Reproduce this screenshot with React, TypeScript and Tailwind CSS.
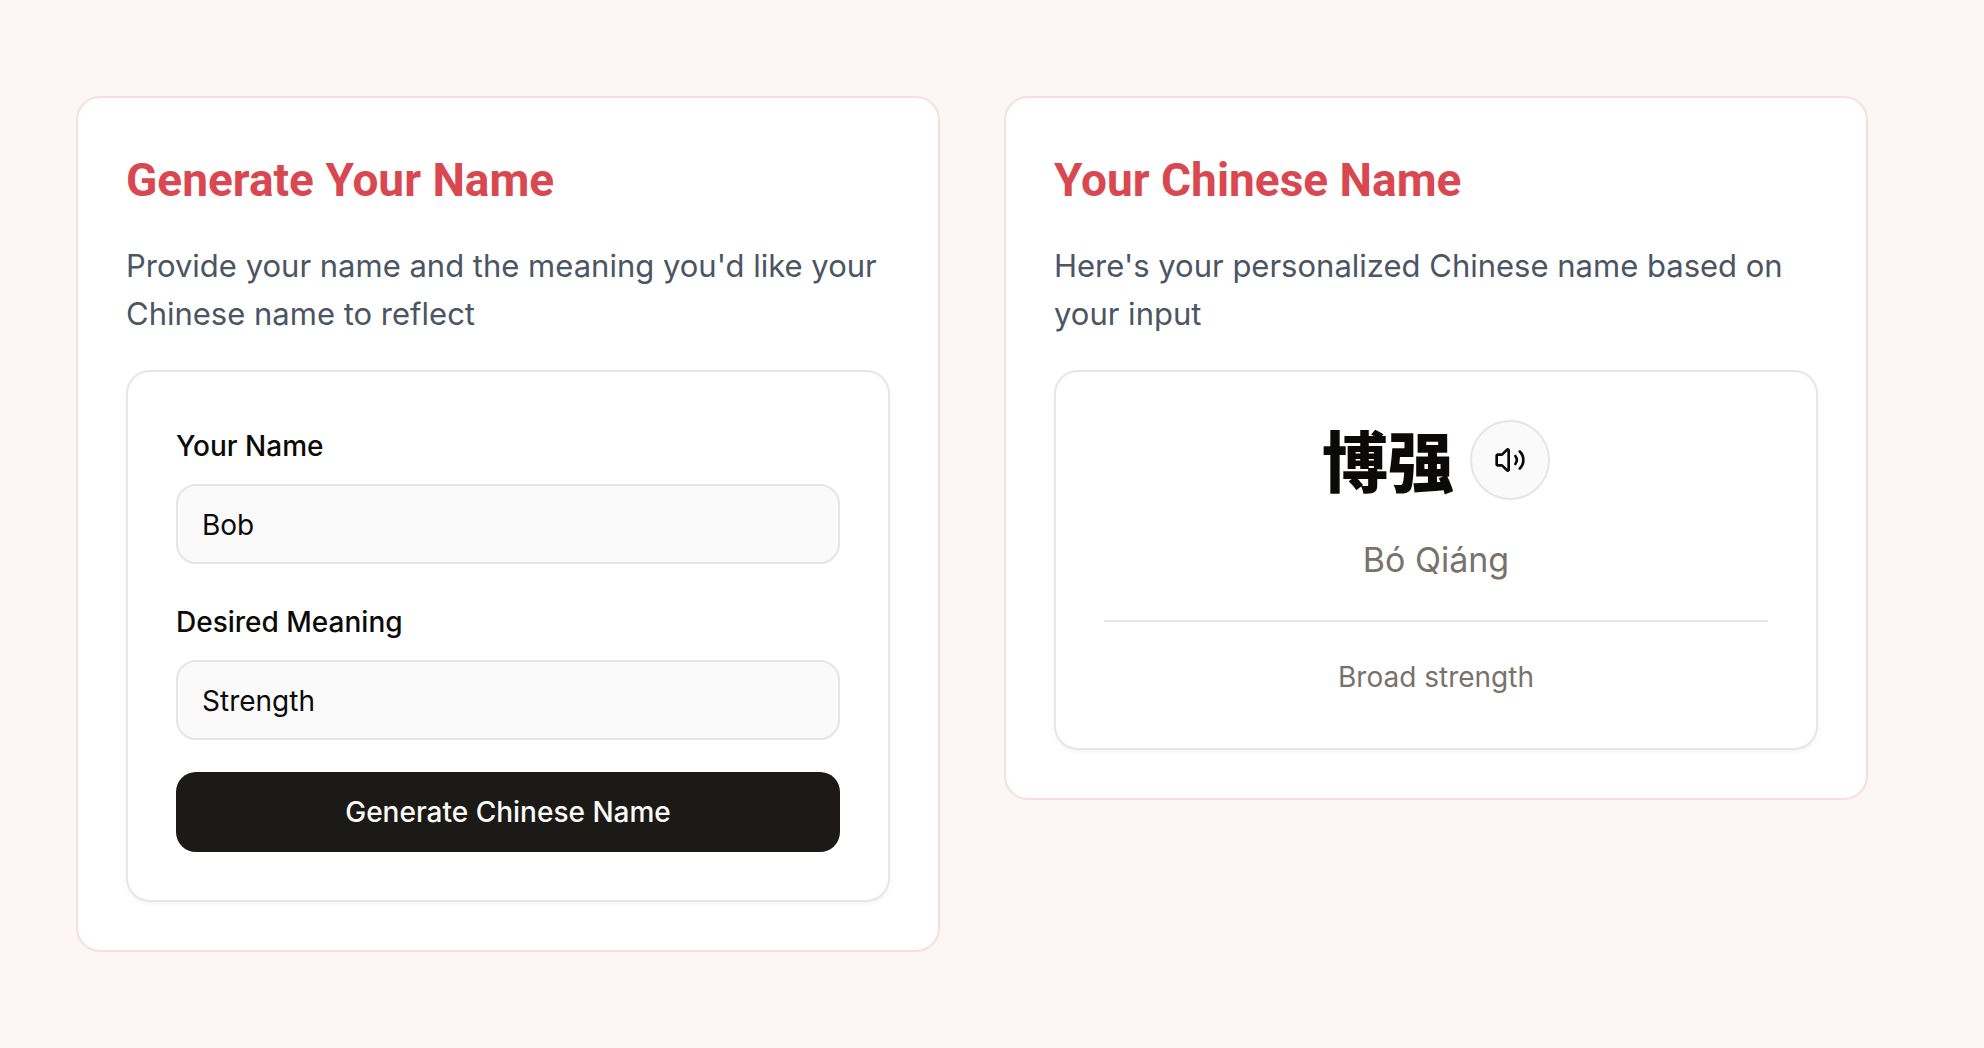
import { useState } from "react";
import type { ReactNode } from "react";
import { Volume2 } from "lucide-react";

function Panel({ title, description, children }: { title: string; description: string; children: ReactNode }) {
    return (
        <section className="flex flex-col gap-8 rounded-3xl border-2 border-[#fadde1] bg-white p-12">
            <h2 className="pt-1 font-[Roboto,sans-serif] text-[46px] leading-[60px] font-bold text-[#d94850]">{title}</h2>
            <p className="text-[31px] leading-[48px] text-[#4b5563]">{description}</p>
            <div className="rounded-3xl border-2 border-[#e5e5eb] p-12 shadow-[0_2px_4px_rgba(0,0,0,0.05)]">{children}</div>
        </section>
    )
}

function Field({ id, label, value, onChange }: { id: string; label: string; value: string; onChange: (value: string) => void }) {
    return (
        <div className="flex flex-col gap-3">
            <label htmlFor={id} className="text-[28px] leading-[52px] font-medium">{label}</label>
            <input
                id={id}
                type="text"
                value={value}
                onChange={(e) => onChange(e.target.value)}
                className="h-20 w-full rounded-[20px] border-2 border-[#e5e5e5] bg-[#fafafa] px-6 pt-[2px] text-[28px]"
            />
        </div>
    )
}

export default function App() {
    const [name, setName] = useState("Bob");
    const [meaning, setMeaning] = useState("Strength");

    return (
        <main className="min-h-screen bg-[#fdf6f6] py-24 pr-[116px] pl-[76px] font-[Inter,'Noto_Sans_CJK_SC',sans-serif] text-[#0c0a09]">
            <div className="grid grid-cols-2 items-start gap-16">
                <Panel title="Generate Your Name" description="Provide your name and the meaning you'd like your Chinese name to reflect">
                    <form className="flex flex-col gap-8" onSubmit={(e) => e.preventDefault()}>
                        <Field id="name" label="Your Name" value={name} onChange={setName} />
                        <Field id="meaning" label="Desired Meaning" value={meaning} onChange={setMeaning} />
                        <button type="submit" className="h-20 rounded-[20px] bg-[#1b1a17] text-[28px] font-medium text-[#fafaf9]">
                            Generate Chinese Name
                        </button>
                    </form>
                </Panel>

                <Panel title="Your Chinese Name" description="Here's your personalized Chinese name based on your input">
                    <div className="flex flex-col gap-8 text-center">
                        <div className="flex items-end justify-center gap-4">
                            <h3 lang="zh-CN" className="text-[66px] leading-[74px] font-black">博强</h3>
                            <button type="button" aria-label="Play pronunciation" className="flex size-20 items-center justify-center rounded-full border-2 border-[#e5e5e5] bg-[#fafafa]">
                                <Volume2 size={32} />
                            </button>
                        </div>
                        <p className="text-[34px] leading-[56px] text-[#78716c]">Bó Qiáng</p>
                        <p className="border-t-2 border-[#e5e5eb] pt-8 text-[28px] leading-[46px] text-[#78716c]">Broad strength</p>
                    </div>
                </Panel>
            </div>
        </main>
    )
}
